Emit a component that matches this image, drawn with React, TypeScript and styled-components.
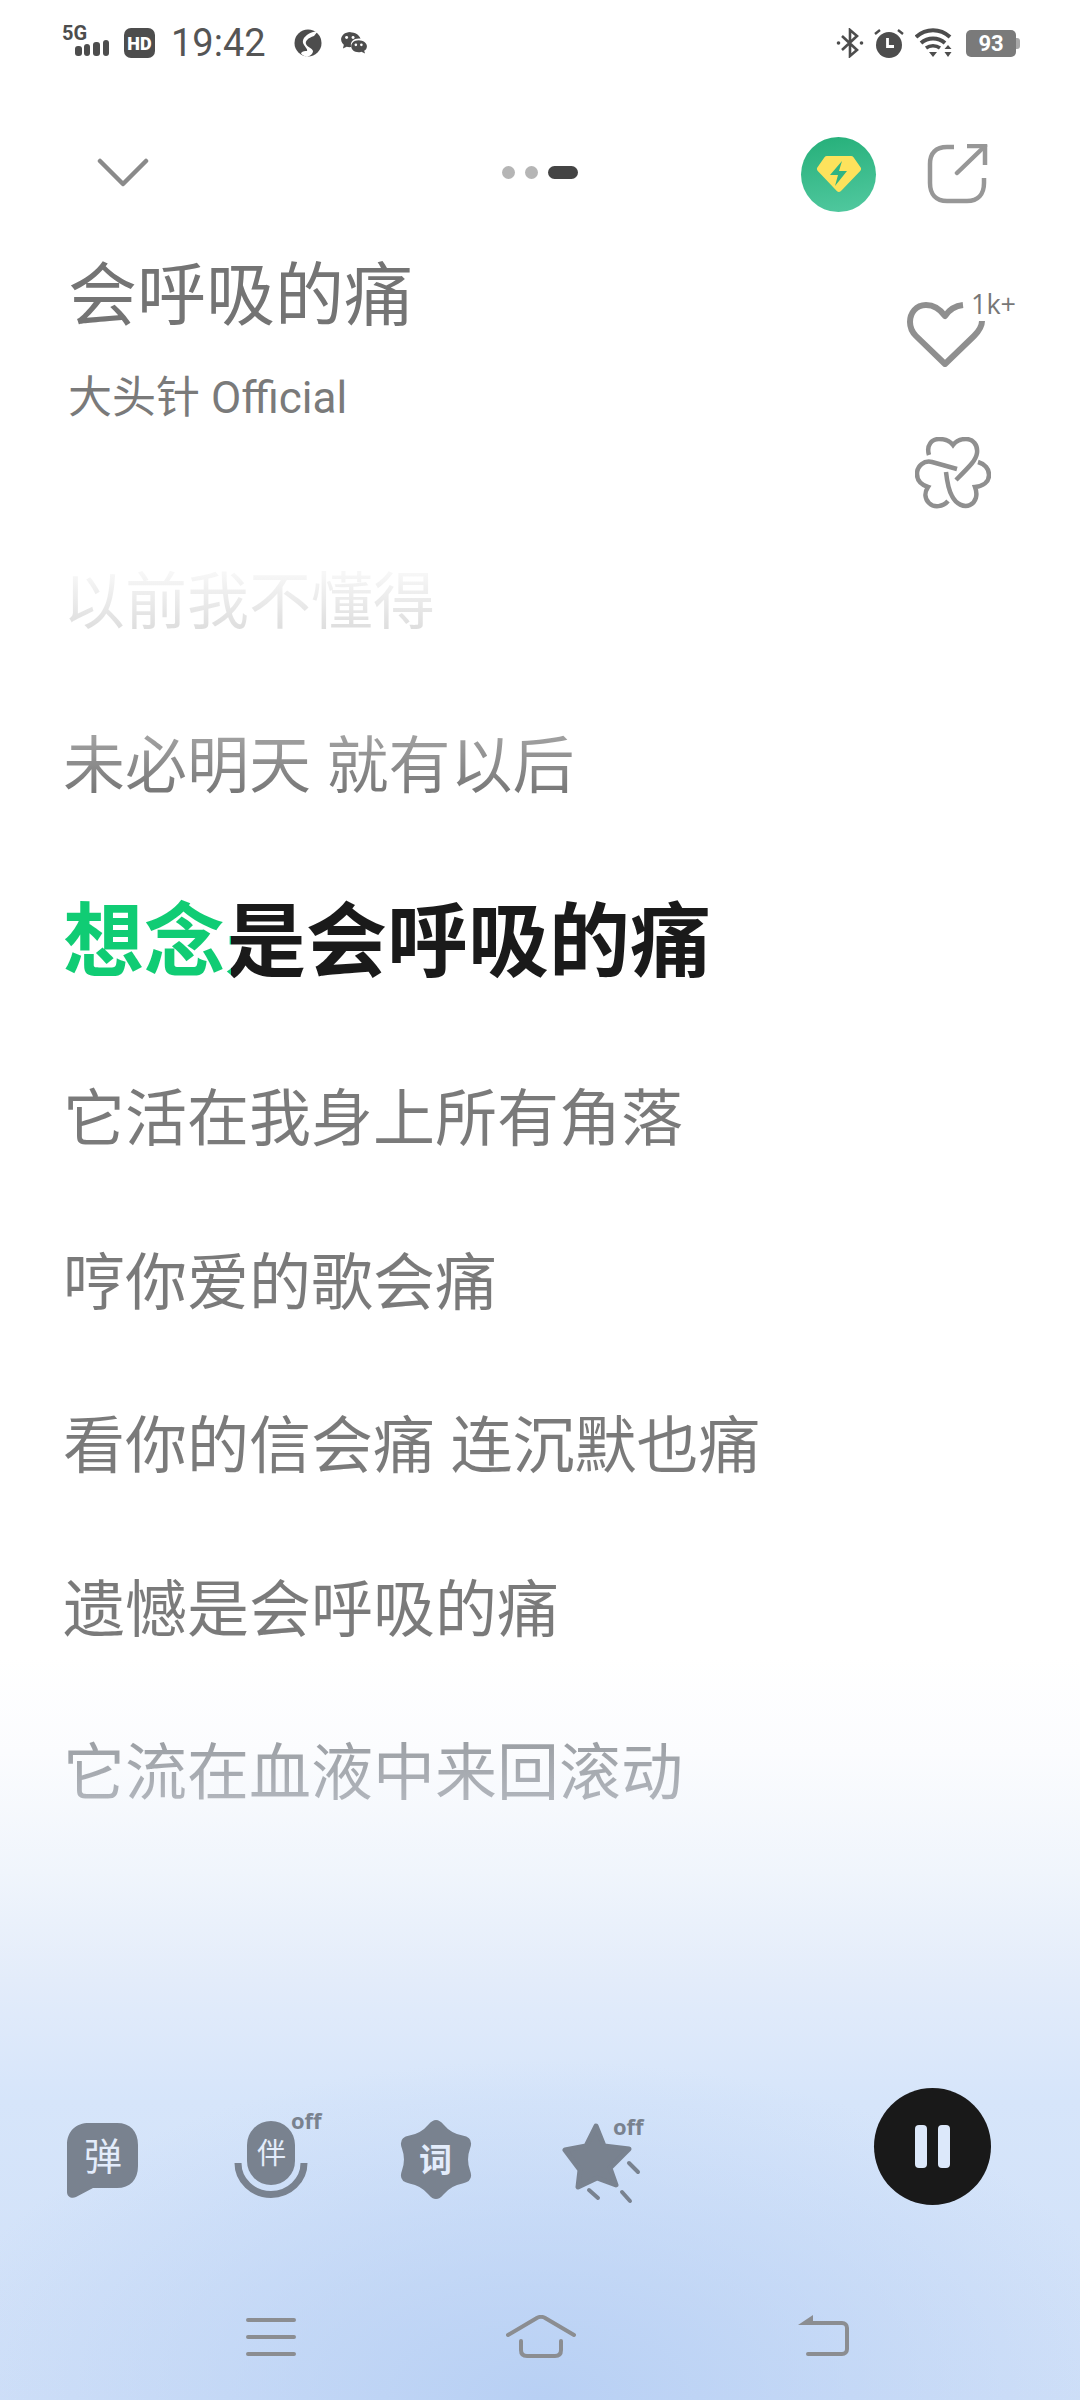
import styled, { createGlobalStyle } from 'styled-components';

const GlobalStyle = createGlobalStyle`
  html, body {
    margin: 0;
    padding: 0;
    background: #fff;
  }
  * {
    box-sizing: border-box;
  }
`;

const Page = styled.div`
  width: 1080px;
  height: 2400px;
  display: flex;
  flex-direction: column;
  overflow: hidden;
  font-family: Roboto, "Noto Sans CJK SC", sans-serif;
  background:
    radial-gradient(ellipse 620px 340px at 50% 100%, #b8d0f4 0%, rgba(184, 208, 244, 0) 100%),
    linear-gradient(180deg, #ffffff 0%, #ffffff 69%, #fbfcfe 73%, #f0f5fc 78%, #e3ecfa 82.5%, #d6e5fa 87.5%, #d0e0f8 100%);
`;

const StatusBar = styled.div`
  height: 86px;
  padding: 0 60px 0 62px;
  display: flex;
  align-items: center;
  justify-content: space-between;
`;

const StatusGroup = styled.div`
  display: flex;
  align-items: center;
`;

const Clock = styled.span`
  font-size: 38px;
  line-height: 1;
  margin: 0 28px 0 16px;
  color: #555;
`;

const Battery = styled.div`
  width: 50px;
  height: 27px;
  margin: 0 4px 0 11px;
  border-radius: 5px;
  background: #7a7a7a;
  color: #fff;
  font-size: 22px;
  font-weight: 700;
  display: flex;
  align-items: center;
  justify-content: center;
  position: relative;
  &::after {
    content: "";
    position: absolute;
    right: -4px;
    top: 8px;
    width: 4px;
    height: 11px;
    border-radius: 0 3px 3px 0;
    background: #a8a8a8;
  }
`;

const TopBar = styled.div`
  height: 85px;
  margin-top: 44px;
  padding: 0 92px 0 97px;
  display: flex;
  align-items: center;
`;

const Dots = styled.div`
  flex: 1;
  display: flex;
  align-items: center;
  justify-content: center;
  gap: 10px;
  padding-left: 130px;
`;

const Dot = styled.span<{ $active?: boolean }>`
  width: ${p => (p.$active ? 30 : 13)}px;
  height: 13px;
  border-radius: 7px;
  background: ${p => (p.$active ? '#444' : '#b5b5b5')};
`;

const TopActions = styled.div`
  display: flex;
  align-items: center;
  gap: 51px;
  margin-top: 3px;
`;

const Badge = styled.div`
  width: 75px;
  height: 75px;
  border-radius: 50%;
  background: linear-gradient(170deg, #25af79, #52c9a0);
  display: flex;
  align-items: center;
  justify-content: center;
`;

const SongHeader = styled.div`
  height: 306px;
  padding: 34px 64px 0 68px;
  display: flex;
  justify-content: space-between;
`;

const SongInfo = styled.div`
  display: flex;
  flex-direction: column;
`;

const SongTitle = styled.h1`
  margin: 0;
  font-size: 69px;
  line-height: 96px;
  font-weight: 400;
  color: #747474;
`;

const Artist = styled.div`
  margin-top: 28px;
  font-size: 44px;
  line-height: 50px;
  color: #7a7a7a;
`;

const SideActions = styled.div`
  display: flex;
  flex-direction: column;
  align-items: flex-end;
  padding-top: 40px;
  gap: 70px;
`;

const LikeButton = styled.div`
  width: 110px;
  height: 78px;
  position: relative;
  padding-top: 12px;
`;

const LikeCount = styled.span`
  position: absolute;
  right: 0;
  top: 0;
  font-family: "Open Sans", sans-serif;
  font-size: 27px;
  line-height: 30px;
  color: #777;
`;

const LyricList = styled.div`
  display: flex;
  flex-direction: column;
  padding-left: 63px;
`;

const Lyric = styled.div<{ $fill?: string }>`
  height: 163.5px;
  line-height: 163.5px;
  font-size: 62px;
  white-space: pre;
  background: ${p => p.$fill ?? 'linear-gradient(#7a7a7a, #7a7a7a)'};
  -webkit-background-clip: text;
  background-clip: text;
  color: transparent;
`;

const ActiveLyric = styled.div`
  height: 190px;
  line-height: 190px;
  font-size: 81px;
  font-weight: 700;
  background: linear-gradient(90deg, #10cc74 168px, #1a1a1a 168px);
  -webkit-background-clip: text;
  background-clip: text;
  color: transparent;
`;

const Spacer = styled.div`
  flex: 1;
`;

const Controls = styled.div`
  height: 120px;
  margin-bottom: 68px;
  padding: 0 89px 0 67px;
  display: flex;
  align-items: flex-start;
`;

const ControlSlot = styled.div<{ $w: number }>`
  width: ${p => p.$w}px;
  height: 120px;
  position: relative;
  flex-shrink: 0;
`;

const IconGlyph = styled.span<{ $size: number; $x: number; $y: number; $bold?: boolean }>`
  position: absolute;
  left: ${p => p.$x}px;
  top: ${p => p.$y}px;
  font-size: ${p => p.$size}px;
  font-weight: ${p => (p.$bold ? 700 : 400)};
  line-height: 1;
  color: #e3ecfb;
`;

const OffLabel = styled.span<{ $x: number; $y: number }>`
  position: absolute;
  left: ${p => p.$x}px;
  top: ${p => p.$y}px;
  font-family: "Open Sans", sans-serif;
  font-size: 22px;
  line-height: 1;
  font-weight: 700;
  color: #79828f;
`;

const PauseButton = styled.div`
  margin: -12px 0 0 auto;
  width: 117px;
  height: 117px;
  border-radius: 50%;
  background: #191919;
  display: flex;
  align-items: center;
  justify-content: center;
  gap: 11px;
`;

const PauseBar = styled.span`
  width: 12px;
  height: 43px;
  border-radius: 4px;
  background: #dce8fa;
`;

const NavBar = styled.div`
  height: 112px;
  padding: 27px 0 0 246px;
  display: flex;
  align-items: flex-start;
  gap: 210px;
`;

const iconGrey = '#79828f';
const navGrey = '#8b8d91';
const statusGrey = '#4d4d4d';

export default function App() {
  return (
    <Page>
      <GlobalStyle />
      <StatusBar>
        <StatusGroup>
          <svg width="48" height="48" viewBox="0 0 48 48">
            <text x="0" y="21" fontSize="20" fontWeight="700" fontFamily="Roboto, sans-serif" fill={statusGrey}>5G</text>
            <rect x="13" y="27" width="7" height="10" rx="3" fill={statusGrey} />
            <rect x="22" y="25" width="6" height="12" rx="3" fill={statusGrey} />
            <rect x="31" y="23" width="7" height="14" rx="3" fill={statusGrey} />
            <rect x="41" y="21" width="6" height="16" rx="3" fill={statusGrey} />
          </svg>
          <svg width="31" height="30" viewBox="0 0 31 30" style={{ marginLeft: 14 }}>
            <rect width="31" height="30" rx="7" fill={statusGrey} />
            <text x="15.5" y="21.5" textAnchor="middle" fontSize="18" fontWeight="900" fontFamily="Roboto, sans-serif" fill="#fff">HD</text>
          </svg>
          <Clock>19:42</Clock>
          <svg width="28" height="28" viewBox="0 0 28 28">
            <circle cx="14" cy="14" r="13.5" fill={statusGrey} />
            <path d="M24 2l-4 5c-6 2-9 5-8 8 1 3 6 4 7 7 0 3-3 5-6 6-4-1-6-3-6-4 2-2 4-2 6-2 1-2-3-5-4-8-1-5 4-9 10-11z" fill="#fff" />
          </svg>
          <svg width="28" height="24" viewBox="0 0 30 26" style={{ marginLeft: 18 }}>
            <path d="M11 1C5 1 1 5 1 9c0 3 2 5 3 6l-1 4 4-2c2 .6 3 .6 5 .4-2-6 4-10 10-9-1-4-6-7-11-7z" fill={statusGrey} />
            <path d="M20 10c-5 0-8 3-8 6.500s3 6.500 8 6.500c1 0 2 0 3-.5l4 2-1-3c2-1 3-3 3-5 0-3.500-4-6.500-9-6.500z" fill={statusGrey} />
            <circle cx="7" cy="7" r="1.600" fill="#fff" />
            <circle cx="14" cy="7" r="1.600" fill="#fff" />
            <circle cx="17" cy="15" r="1.400" fill="#fff" />
            <circle cx="23" cy="15" r="1.400" fill="#fff" />
          </svg>
        </StatusGroup>
        <StatusGroup>
          <svg width="28" height="30" viewBox="0 0 28 30" fill="none" stroke={statusGrey} strokeWidth="2.600">
            <path d="M6 8l15 14-7 6V2l7 6L6 22" />
            <circle cx="2.500" cy="15" r="1.800" fill={statusGrey} stroke="none" />
            <circle cx="25.500" cy="15" r="1.800" fill={statusGrey} stroke="none" />
          </svg>
          <svg width="30" height="30" viewBox="0 0 30 30" style={{ marginLeft: 10 }}>
            <circle cx="15" cy="17" r="13" fill={statusGrey} />
            <path d="M13.500 10v8.500h6.500" fill="none" stroke="#fff" strokeWidth="2.800" />
            <path d="M1 6l5-4M29 6l-5-4" stroke={statusGrey} strokeWidth="2.400" />
          </svg>
          <svg width="40" height="30" viewBox="0 0 40 30" fill="none" style={{ marginLeft: 11 }}>
            <path d="M1 9c10-9 24-9 34 0" stroke={statusGrey} strokeWidth="4" />
            <path d="M6 15c7-6 17-6 24 0" stroke={statusGrey} strokeWidth="4" />
            <path d="M11 20c4-3 10-3 14 0" stroke={statusGrey} strokeWidth="3.500" />
            <path d="M14 24h8l-4 5zM33 17l3.500 4h-7zM29.500 24h7L33 29z" fill={statusGrey} />
          </svg>
          <Battery>93</Battery>
        </StatusGroup>
      </StatusBar>

      <TopBar>
        <svg width="52" height="32" viewBox="0 0 52 32" fill="none" stroke="#8a8a8a" strokeWidth="4.500" strokeLinecap="round" strokeLinejoin="round">
          <path d="M3 4l23 23L49 4" />
        </svg>
        <Dots>
          <Dot />
          <Dot />
          <Dot $active />
        </Dots>
        <TopActions>
          <Badge>
            <svg width="46" height="38" viewBox="0 0 46 38">
              <path d="M11 1h24a3 3 0 0 1 2.500 1.300l7 10a3 3 0 0 1-.3 3.700L25 36a3 3 0 0 1-4.200 0L1.800 16a3 3 0 0 1-.3-3.700l7-10A3 3 0 0 1 11 1z" fill="#fde25c" />
              <path d="M26 6L14 20h8l-3 11 12-15h-8z" fill="#2fb483" />
            </svg>
          </Badge>
          <svg width="61" height="60" viewBox="0 0 61 60" fill="none" stroke="#979797" strokeWidth="4.500">
            <path d="M27 3H20C9 3 3 9 3 20v19c0 11 6 18 17 18h20c11 0 17-7 17-18v-5" />
            <path d="M30 29L58 2" strokeLinecap="round" />
            <path d="M40 2h18v19" />
          </svg>
        </TopActions>
      </TopBar>

      <SongHeader>
        <SongInfo>
          <SongTitle>会呼吸的痛</SongTitle>
          <Artist>大头针 Official</Artist>
        </SongInfo>
        <SideActions>
          <LikeButton>
            <svg width="80" height="66" viewBox="0 0 80 66" fill="none" stroke="#8f8f8f" strokeWidth="6" strokeLinejoin="round">
              <path d="M57 4C48 5 43 9 39 15 34 8 28 4 20 4 10 4 4 12 4 21c0 6 2 10 6 14l29 28 29-28c5-5 8-9 8-15" />
            </svg>
            <LikeCount>1k+</LikeCount>
          </LikeButton>
          <svg width="76" height="72" viewBox="0 0 76 72" fill="none" stroke="#8f8f8f" strokeWidth="4.500" style={{ marginRight: 25 }}>
            <path d="M14 18C11 8 17 2 24 2c6 0 11 2 14 6 3-4 8-6 13-6 7 0 12 6 11 14-1 7-6 12-21 27" />
            <path d="M42 32L17 25C9 23 2 29 2 37c0 7 5 11 11 13-4 6-3 12 1 16 5 5 14 4 19-2" />
            <path d="M31 35c1 9 2 17 6 24 4 8 12 12 18 9 6-3 8-10 5-18 8-1 14-5 14-12 0-6-4-11-11-13" />
          </svg>
        </SideActions>
      </SongHeader>

      <LyricList>
        <Lyric $fill="linear-gradient(180deg, #f7f7f7 32%, #dcdcdc 68%)">以前我不懂得</Lyric>
        <Lyric $fill="linear-gradient(180deg, #a0a0a0 32%, #757575 68%)">未必明天 就有以后</Lyric>
        <ActiveLyric>想念是会呼吸的痛</ActiveLyric>
        <Lyric>它活在我身上所有角落</Lyric>
        <Lyric>哼你爱的歌会痛</Lyric>
        <Lyric>看你的信会痛 连沉默也痛</Lyric>
        <Lyric>遗憾是会呼吸的痛</Lyric>
        <Lyric $fill="linear-gradient(180deg, #9da1a6 32%, #b2b6bd 68%)">它流在血液中来回滚动</Lyric>
      </LyricList>

      <Spacer />

      <Controls>
        <ControlSlot $w={167}>
          <svg width="72" height="120" viewBox="0 0 72 120">
            <path d="M0 45C0 31 9 23 22 23h28c13 0 21 8 21 22v21c0 14-8 22-21 22H26L9 97c-4 2-9 0-9-5z" fill={iconGrey} />
          </svg>
          <IconGlyph $size={38} $x={17} $y={38}>弹</IconGlyph>
        </ControlSlot>
        <ControlSlot $w={166}>
          <svg width="74" height="120" viewBox="0 0 74 120" fill="none">
            <rect x="13" y="21" width="48" height="64" rx="24" fill={iconGrey} />
            <path d="M4 63a33 31.500 0 0 0 66 0" stroke={iconGrey} strokeWidth="7" />
          </svg>
          <IconGlyph $size={29} $x={23} $y={40}>伴</IconGlyph>
          <OffLabel $x={57} $y={9}>off</OffLabel>
        </ControlSlot>
        <ControlSlot $w={162}>
          <svg width="72" height="120" viewBox="0 0 72 120">
            <path
              d="M43.500 24.500Q51 33.500 62.550 35.500Q74.100 37.500 70.050 48.500Q66 59.500 70.050 70.500Q74.100 81.500 62.550 83.500Q51 85.500 43.500 94.500Q36 103.500 28.500 94.500Q21 85.500 9.450 83.500Q-2.100 81.500 1.950 70.500Q6 59.500 1.950 48.500Q-2.100 37.500 9.450 35.500Q21 33.500 28.500 24.500Q36 15.500 43.500 24.500Z"
              fill={iconGrey}
            />
          </svg>
          <IconGlyph $size={33} $x={19} $y={44} $bold>词</IconGlyph>
        </ControlSlot>
        <ControlSlot $w={82}>
          <svg width="82" height="120" viewBox="0 0 82 120" fill="none">
            <polygon
              points="34,26 42,46 67,49 48,68 54,85 35,78 16,87 18,70 3,50 24,46"
              fill={iconGrey}
              stroke={iconGrey}
              strokeWidth="5"
              strokeLinejoin="round"
            />
            <path d="M67 63l9 9M27 90l9 8M60 92l8 9" stroke={iconGrey} strokeWidth="4" strokeLinecap="round" />
          </svg>
          <OffLabel $x={51} $y={15}>off</OffLabel>
        </ControlSlot>
        <PauseButton>
          <PauseBar />
          <PauseBar />
        </PauseButton>
      </Controls>

      <NavBar>
        <svg width="50" height="44" viewBox="0 0 50 44" stroke={navGrey} strokeWidth="4" strokeLinecap="round">
          <path d="M2 5h46M2 22h46M2 39h46" />
        </svg>
        <svg width="82" height="44" viewBox="0 0 82 44" fill="none" stroke={navGrey} strokeWidth="4" strokeLinecap="round">
          <path d="M2 20L30 3.500c3-2 7-2 10 0L68 20" />
          <path d="M15 26v9c0 4 2 6 6 6h28c4 0 6-2 6-6v-9" />
        </svg>
        <svg width="52" height="44" viewBox="0 0 52 44" fill="none" stroke={navGrey} strokeWidth="4" strokeLinecap="round">
          <path d="M14 8h30c3 0 5 2 5 5v21c0 3-2 5-5 5H10" />
          <path d="M0 10L15 0v10z" fill={navGrey} stroke="none" />
        </svg>
      </NavBar>
    </Page>
  );
}
